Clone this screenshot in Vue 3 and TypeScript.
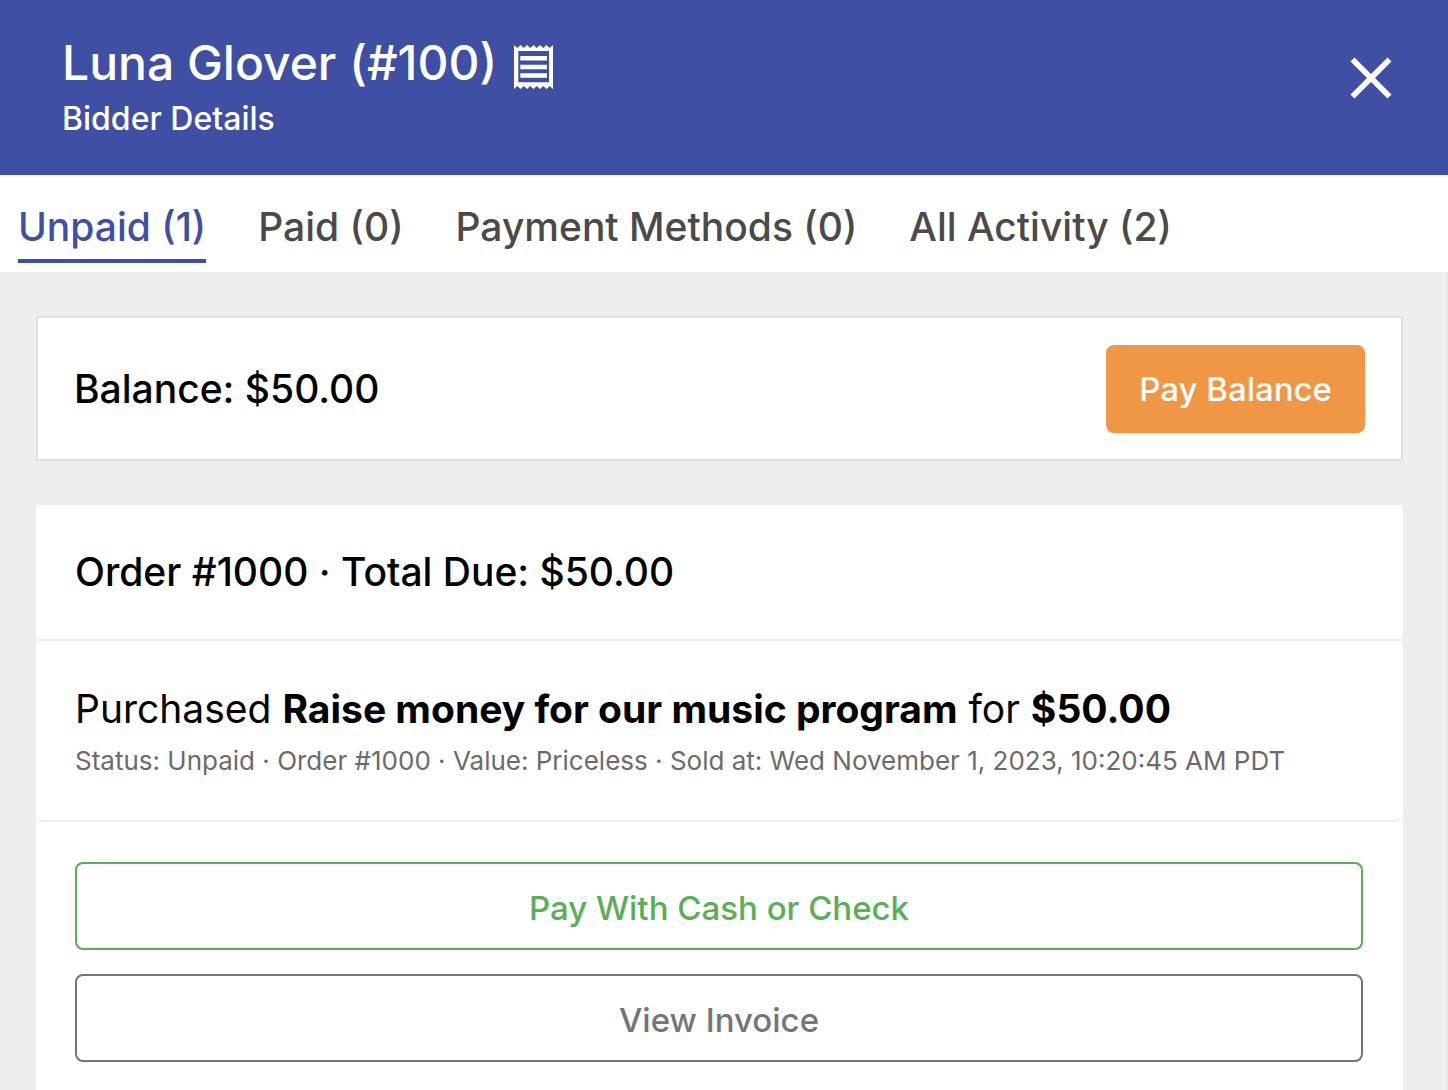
<script setup lang="ts">
import { ref } from 'vue'

interface Tab {
  id: string
  label: string
  count: number
}

const bidder = { name: 'Luna Glover', number: 100 }

const tabs: Tab[] = [
  { id: 'unpaid', label: 'Unpaid', count: 1 },
  { id: 'paid', label: 'Paid', count: 0 },
  { id: 'methods', label: 'Payment Methods', count: 0 },
  { id: 'activity', label: 'All Activity', count: 2 },
]
const activeTab = ref('unpaid')

const order = {
  number: 1000,
  total: '$50.00',
  item: 'Raise money for our music program',
  details: [
    'Status: Unpaid',
    'Order #1000',
    'Value: Priceless',
    'Sold at: Wed November 1, 2023, 10:20:45 AM PDT',
  ],
}
</script>

<template>
  <div class="page">
    <header class="header">
      <div>
        <div class="title-row">
          <h1 class="title">{{ bidder.name }} (#{{ bidder.number }})</h1>
          <button class="icon-button" type="button" aria-label="Receipt">
            <svg class="receipt" viewBox="0 0 39 46" aria-hidden="true">
              <path
                fill="#fff"
                fill-rule="evenodd"
                d="M0 1l3.250 3 3.250-3 3.250 3 3.250-3 3.250 3 3.250-3 3.250 3 3.250-3 3.250 3 3.250-3 3.250 3L39 1v44l-3.250-3-3.250 3-3.250-3-3.250 3-3.250-3-3.250 3-3.250-3-3.250 3-3.250-3-3.250 3-3.250-3L0 45zM4.300 7v31.300h30.700V7z"
              />
              <path fill="#fff" d="M6.300 12h26.700v4.500H6.300zM6.300 20.700h26.700v4.500H6.300zM6.300 29.300h26.700v4.500H6.300z" />
            </svg>
          </button>
        </div>
        <p class="subtitle">Bidder Details</p>
      </div>
      <button class="icon-button" type="button" aria-label="Close">
        <svg class="close" viewBox="0 0 42 42" aria-hidden="true">
          <path d="M2.500 2.500l37 37M39.500 2.500l-37 37" stroke="#fff" stroke-width="5.600" fill="none" />
        </svg>
      </button>
    </header>

    <nav class="tabs">
      <a
        v-for="tab in tabs"
        :key="tab.id"
        :href="`#${tab.id}`"
        class="tab"
        :class="{ active: tab.id === activeTab }"
        @click.prevent="activeTab = tab.id"
        >{{ tab.label }} ({{ tab.count }})</a
      >
    </nav>

    <main class="content">
      <section class="balance">
        <h2 class="heading">Balance: {{ order.total }}</h2>
        <button class="button pay-balance" type="button">Pay Balance</button>
      </section>

      <section class="order">
        <h2 class="heading order-heading">
          Order #{{ order.number }} · Total Due: {{ order.total }}
        </h2>
        <div class="item">
          <p class="purchase">
            Purchased <strong>{{ order.item }}</strong> for <strong>{{ order.total }}</strong>
          </p>
          <p class="details">{{ order.details.join(' · ') }}</p>
        </div>
        <div class="actions">
          <button class="button cash" type="button">Pay With Cash or Check</button>
          <button class="button invoice" type="button">View Invoice</button>
        </div>
      </section>
    </main>
  </div>
</template>

<style>
body {
  margin: 0;
}
</style>

<style scoped>
.page {
  display: flex;
  flex-direction: column;
  min-height: 100vh;
  background: #fff;
  color: #000;
  font-family: Inter, 'Liberation Sans', sans-serif;
}

.page * {
  box-sizing: border-box;
}

h1,
h2,
p {
  margin: 0;
}

.header {
  display: flex;
  justify-content: space-between;
  align-items: flex-start;
  padding: 31px 56px 32px 62px;
  background: #3f4fa3;
  color: #fff;
}

.title-row {
  display: flex;
  align-items: flex-end;
  gap: 17px;
}

.title {
  font-size: 48px;
  line-height: 64px;
  font-weight: 500;
}

.subtitle {
  font-size: 32px;
  line-height: 48px;
  font-weight: 500;
}

.icon-button {
  display: flex;
  padding: 0;
  border: 0;
  background: none;
  cursor: pointer;
}

.receipt {
  width: 39px;
  height: 46px;
  margin-bottom: 5px;
}

.close {
  width: 42px;
  height: 42px;
  margin-top: 26px;
}

.tabs {
  display: flex;
  gap: 52px;
  padding: 20px 18px 9px;
}

.tab {
  padding: 2px 0;
  border-bottom: 4px solid transparent;
  color: #4a4a4a;
  font-size: 39px;
  line-height: 60px;
  font-weight: 500;
  text-decoration: none;
  white-space: nowrap;
}

.tab.active {
  border-color: #3f4fa3;
  color: #3f4fa3;
}

.content {
  display: flex;
  flex: 1;
  flex-direction: column;
  gap: 44px;
  padding: 44px 44px 0 36px;
  border-right: 1px solid #e0e0e0;
  background: #eee;
}

.balance {
  display: flex;
  justify-content: space-between;
  align-items: center;
  padding: 27px 36px 26px;
  border: 2px solid #e0e0e0;
  background: #fff;
}

.heading {
  font-size: 39px;
  line-height: 54px;
  font-weight: 500;
}

.button {
  height: 88px;
  border: 2px solid;
  border-radius: 8px;
  background: #fff;
  font-family: inherit;
  font-size: 33px;
  line-height: 44px;
  font-weight: 500;
  cursor: pointer;
}

.pay-balance {
  padding: 0 31px;
  border-color: #f09745;
  background: #f09745;
  color: #fff;
}

.order {
  flex: 1;
  background: #fff;
}

.order-heading {
  padding: 40px 39px;
  border-bottom: 2px solid #eee;
}

.item {
  padding: 40px 39px 35px;
  border-bottom: 2px solid #eee;
  border-radius: 0 0 8px 8px;
}

.purchase {
  font-size: 39px;
  line-height: 56px;
}

.details {
  color: #6b6b6b;
  font-size: 26px;
  line-height: 48px;
}

.actions {
  display: flex;
  flex-direction: column;
  gap: 24px;
  padding: 40px 40px 28px 39px;
}

.actions .button {
  padding: 4px 32px 0;
}

.cash {
  border-color: #5aae57;
  color: #5aae57;
}

.invoice {
  border-color: #757575;
  color: #757575;
}
</style>
